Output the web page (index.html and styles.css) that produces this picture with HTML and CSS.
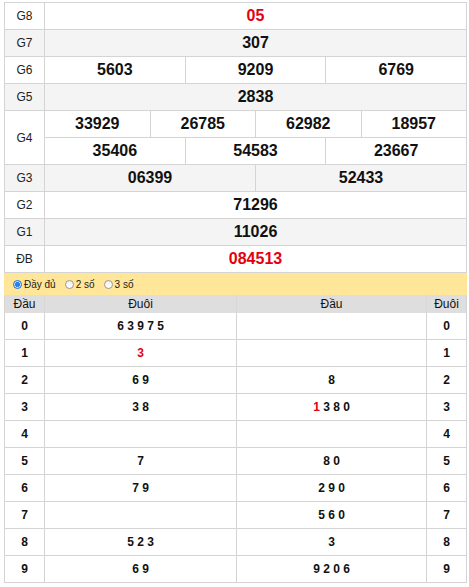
FILE: index.html
```html
<!DOCTYPE html>
<html lang="vi">
<head>
<meta charset="utf-8">
<title>Kết quả</title>
<link rel="stylesheet" href="styles.css">
</head>
<body>
<div class="wrap">
  <div class="kq">
    <div class="row"><div class="lbl">G8</div><div class="vals"><div class="v red">05</div></div></div>
    <div class="row alt"><div class="lbl">G7</div><div class="vals"><div class="v">307</div></div></div>
    <div class="row"><div class="lbl">G6</div><div class="vals"><div class="v">5603</div><div class="v">9209</div><div class="v">6769</div></div></div>
    <div class="row alt"><div class="lbl">G5</div><div class="vals"><div class="v">2838</div></div></div>
    <div class="row g4"><div class="lbl">G4</div>
      <div class="sub">
        <div class="vals"><div class="v">33929</div><div class="v">26785</div><div class="v">62982</div><div class="v">18957</div></div>
        <div class="vals"><div class="v">35406</div><div class="v">54583</div><div class="v">23667</div></div>
      </div>
    </div>
    <div class="row alt"><div class="lbl">G3</div><div class="vals"><div class="v">06399</div><div class="v">52433</div></div></div>
    <div class="row"><div class="lbl">G2</div><div class="vals"><div class="v">71296</div></div></div>
    <div class="row alt"><div class="lbl">G1</div><div class="vals"><div class="v">11026</div></div></div>
    <div class="row"><div class="lbl">ĐB</div><div class="vals"><div class="v red">084513</div></div></div>
  </div>
  <div class="opts">
    <span class="opt"><span class="rd on"></span>Đầy đủ</span>
    <span class="opt"><span class="rd"></span>2 số</span>
    <span class="opt"><span class="rd"></span>3 số</span>
  </div>
  <div class="lt">
    <div class="tr th"><div class="c c1">Đầu</div><div class="c c2">Đuôi</div><div class="c c3">Đầu</div><div class="c c4">Đuôi</div></div>
    <div class="tr"><div class="c c1">0</div><div class="c c2">6 3 9 7 5</div><div class="c c3"></div><div class="c c4">0</div></div>
    <div class="tr"><div class="c c1">1</div><div class="c c2"><span class="red">3</span></div><div class="c c3"></div><div class="c c4">1</div></div>
    <div class="tr"><div class="c c1">2</div><div class="c c2">6 9</div><div class="c c3">8</div><div class="c c4">2</div></div>
    <div class="tr"><div class="c c1">3</div><div class="c c2">3 8</div><div class="c c3"><span class="red">1</span>&nbsp;3 8 0</div><div class="c c4">3</div></div>
    <div class="tr"><div class="c c1">4</div><div class="c c2"></div><div class="c c3"></div><div class="c c4">4</div></div>
    <div class="tr"><div class="c c1">5</div><div class="c c2">7</div><div class="c c3">8 0</div><div class="c c4">5</div></div>
    <div class="tr"><div class="c c1">6</div><div class="c c2">7 9</div><div class="c c3">2 9 0</div><div class="c c4">6</div></div>
    <div class="tr"><div class="c c1">7</div><div class="c c2"></div><div class="c c3">5 6 0</div><div class="c c4">7</div></div>
    <div class="tr"><div class="c c1">8</div><div class="c c2">5 2 3</div><div class="c c3">3</div><div class="c c4">8</div></div>
    <div class="tr"><div class="c c1">9</div><div class="c c2">6 9</div><div class="c c3">9 2 0 6</div><div class="c c4">9</div></div>
  </div>
</div>
</body>
</html>
```

FILE: styles.css
```css
body {
  margin: 0;
  background: #fff;
  font-family: "Liberation Sans", Arial, sans-serif;
  color: #111;
}
.wrap {
  width: 463px;
  margin: 2px 0 0 4px;
}
.kq {
  border: 1px solid #d4d4d4;
  border-bottom: none;
}
.row {
  display: flex;
  height: 27px;
  box-sizing: border-box;
  border-bottom: 1px solid #d4d4d4;
  background: #fff;
}
.row.alt {
  background: #f4f4f4;
}
.row.g4 {
  height: 54px;
}
.lbl {
  width: 40px;
  flex: none;
  box-sizing: border-box;
  border-right: 1px solid #d4d4d4;
  display: flex;
  align-items: center;
  justify-content: center;
  font-size: 12px;
  color: #222;
}
.vals {
  flex: 1;
  display: flex;
  min-width: 0;
}
.sub {
  flex: 1;
  display: flex;
  flex-direction: column;
}
.sub .vals {
  flex: none;
  height: 26px;
}
.sub .vals:first-child {
  border-bottom: 1px solid #d4d4d4;
}
.v {
  flex: 1 1 0;
  min-width: 0;
  display: flex;
  align-items: center;
  justify-content: center;
  font-size: 16px;
  font-weight: bold;
  color: #111;
  box-sizing: border-box;
  border-left: 1px solid #d4d4d4;
}
.v:first-child {
  border-left: none;
}
.red, .v.red {
  color: #e3000f;
}
.opts {
  height: 22px;
  background: #ffe699;
  display: flex;
  align-items: center;
  padding-left: 9px;
  font-size: 10px;
  color: #222;
  gap: 9px;
}
.opt {
  display: flex;
  align-items: center;
}
.rd {
  width: 9px;
  height: 9px;
  box-sizing: border-box;
  border-radius: 50%;
  border: 1px solid #9a9a9a;
  background: linear-gradient(#f0f0f0, #fff);
  margin-right: 2px;
}
.rd.on {
  border-color: #1b6fd8;
  background: radial-gradient(circle, #2a7fe8 0 2.2px, #cfe0f8 2.8px 100%);
}
.lt {
  border-left: 1px solid #d4d4d4;
  border-right: 1px solid #d4d4d4;
}
.tr {
  display: flex;
  height: 27px;
  box-sizing: border-box;
  border-bottom: 1px solid #d4d4d4;
}
.tr.th {
  height: 18px;
  background: #dedede;
  border-bottom: none;
}
.c {
  flex: none;
  box-sizing: border-box;
  display: flex;
  align-items: center;
  justify-content: center;
  font-size: 12px;
  font-weight: bold;
  white-space: pre;
  border-right: 1px solid #d4d4d4;
}
.th .c {
  font-weight: normal;
  color: #111;
  border-right-color: #d8d8d8;
}
.c1 { width: 40px; }
.c2 { width: 192px; }
.c3 { width: 190px; }
.c4 { width: 39px; border-right: none; }
```
